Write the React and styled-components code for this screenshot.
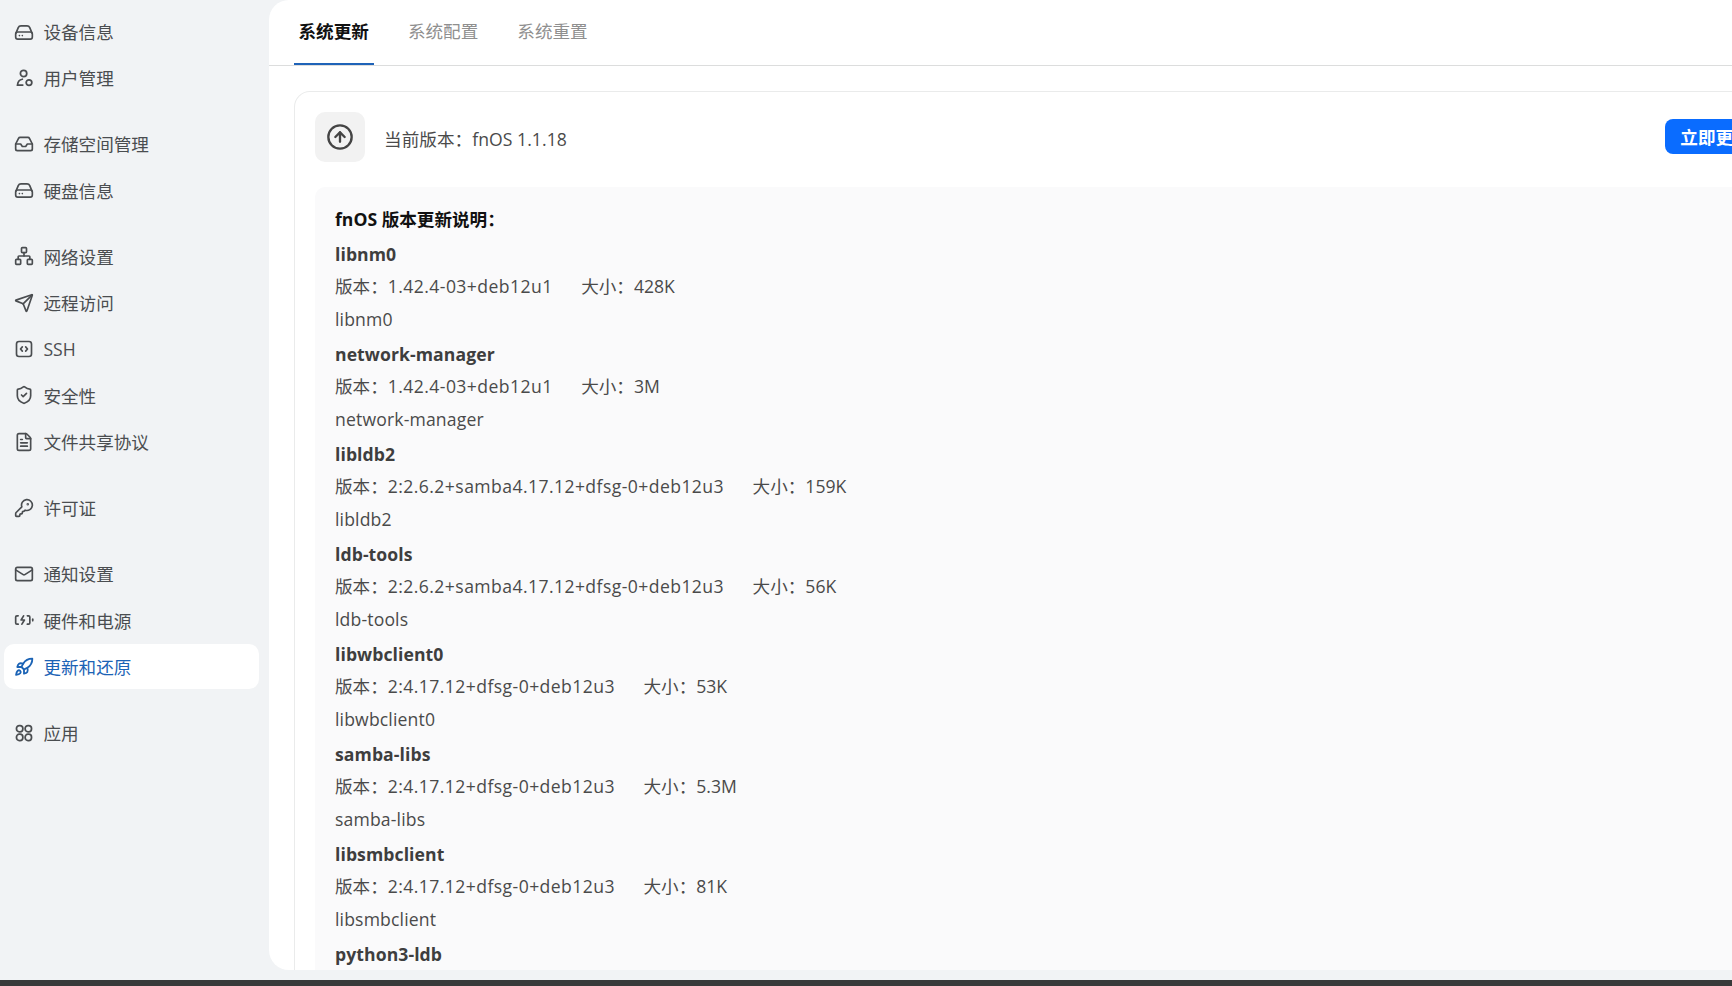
import React from 'react';
import styled, { createGlobalStyle } from 'styled-components';
import { Inbox, Network, Send, ShieldCheck, FileText, KeyRound, Mail, Rocket, CircleArrowUp } from 'lucide-react';

const GlobalStyle = createGlobalStyle`
  html, body { margin: 0; padding: 0; height: 100%; overflow: hidden; }
  body {
    font-family: "Open Sans", "Noto Sans CJK SC", sans-serif;
    background: #f1f3f5;
    color: #444;
  }
`;

const Page = styled.div`
  display: flex;
  flex-direction: column;
  height: 100vh;
`;

const Body = styled.div`
  flex: 1;
  min-height: 0;
  display: flex;
`;

const Taskbar = styled.div`
  height: 6px;
  background: #383a3a;
`;

const Sidebar = styled.nav`
  width: 269px;
  flex: none;
  padding: 9px 10px 0 4px;
  box-sizing: border-box;
`;

const Group = styled.div`
  display: flex;
  flex-direction: column;
  gap: 1.4px;
  margin-bottom: 21px;
`;

const Item = styled.a`
  height: 45px;
  display: flex;
  align-items: center;
  gap: 9.4px;
  padding-left: 10px;
  border-radius: 10px;
  font-size: 17.6px;
  color: ${(p) => (p.$active ? '#1b63b5' : '#4a4d50')};
  background: ${(p) => (p.$active ? '#fff' : 'transparent')};
  svg {
    width: 20px;
    height: 20px;
    flex: none;
    color: ${(p) => (p.$active ? '#1b63b5' : '#4a4d50')};
  }
`;

const Main = styled.main`
  flex: 1;
  min-width: 0;
  margin-bottom: 10px;
  background: #fff;
  border-radius: 20px 0 0 20px;
  overflow: hidden;
  display: flex;
  flex-direction: column;
`;

const Tabs = styled.div`
  height: 66px;
  flex: none;
  box-sizing: border-box;
  display: flex;
  gap: 29.5px;
  padding-left: 25px;
  border-bottom: 1px solid #dcdddd;
`;

const Tab = styled.div`
  height: 65px;
  box-sizing: border-box;
  padding: 0 5px 3px 4.5px;
  display: flex;
  align-items: center;
  font-size: 17.6px;
  font-weight: ${(p) => (p.$active ? 700 : 400)};
  color: ${(p) => (p.$active ? '#111' : '#8f8f8f')};
  border-bottom: 2px solid ${(p) => (p.$active ? '#1f63b8' : 'transparent')};
`;

const Card = styled.section`
  width: 1493px;
  flex: 1;
  min-height: 0;
  box-sizing: border-box;
  margin: 25px 0 0 25px;
  padding: 20px 20px 0;
  border: 1px solid #eaebeb;
  border-bottom: none;
  border-radius: 16px 16px 0 0;
  display: flex;
  flex-direction: column;
`;

const VersionRow = styled.div`
  display: flex;
  align-items: center;
  height: 50px;
  flex: none;
`;

const IconBox = styled.div`
  width: 50px;
  height: 50px;
  border-radius: 10px;
  background: #f2f2f2;
  display: flex;
  align-items: center;
  justify-content: center;
  color: #444;
  svg {
    width: 28px;
    height: 28px;
  }
`;

const VersionText = styled.div`
  margin: 2px 0 0 19px;
  font-size: 17.6px;
  letter-spacing: 0.05px;
  color: #4a4a4a;
`;

const UpdateButton = styled.button`
  margin: 0 0 1px auto;
  height: 34.5px;
  width: 101px;
  padding: 0;
  border: none;
  border-radius: 8px;
  background: #0a6cff;
  color: #fff;
  font: 700 17.6px "Open Sans", "Noto Sans CJK SC", sans-serif;
`;

const Notes = styled.div`
  flex: 1;
  min-height: 0;
  margin-top: 25px;
  padding: 15px 20px 0;
  background: #fafafb;
  border-radius: 10px 10px 0 0;
  font-size: 17.6px;
  overflow: hidden;
`;

const NotesTitle = styled.div`
  font-weight: 700;
  color: #111;
  line-height: 35px;
`;

const PackageName = styled.div`
  font-weight: 700;
  letter-spacing: 0.08px;
  color: #3e3e3e;
  line-height: 34px;
`;

const VersionLine = styled.div`
  line-height: 31px;
  color: #4a4a4a;
`;

const VersionValue = styled.span`
  letter-spacing: 0.42px;
`;

const Description = styled.div`
  line-height: 35px;
  letter-spacing: 0.15px;
  color: #4a4a4a;
`;

const Size = styled.span`
  margin-left: 28.5px;
`;

const DriveIcon = () => (
  <svg viewBox="0 0 24 24" fill="none" stroke="currentColor" strokeWidth="2" strokeLinejoin="round" strokeLinecap="round">
    <path d="M2.5 13l2.6-6.2A3.6 3.6 0 0 1 8.4 4.6h7.2a3.6 3.6 0 0 1 3.3 2.2l2.6 6.2" />
    <rect x="2" y="12" width="20" height="8.5" rx="2.5" />
    <path d="M6.5 16.3h.01M10 16.3h.01" />
  </svg>
);

const UserGearIcon = () => (
  <svg viewBox="0 0 24 24" fill="none" stroke="currentColor" strokeWidth="2.1" strokeLinecap="round">
    <circle cx="11.5" cy="6.5" r="3.8" />
    <path d="M10 13.5c-3 .5-5.5 3.2-5.8 7h6.3" />
    <circle cx="18" cy="17.5" r="3.4" />
  </svg>
);

const CodeBoxIcon = () => (
  <svg viewBox="0 0 24 24" fill="none" stroke="currentColor" strokeWidth="2" strokeLinecap="round" strokeLinejoin="round">
    <rect x="3" y="3" width="18" height="18" rx="3" />
    <path d="M10 9.5L7.8 12l2.2 2.5M14 9.5l2.2 2.5-2.2 2.5" />
  </svg>
);

const PowerIcon = () => (
  <svg viewBox="0 0 24 24" fill="none" stroke="currentColor" strokeWidth="2" strokeLinecap="round" strokeLinejoin="round">
    <path d="M5 7H3.5A1.5 1.5 0 0 0 2 8.5v7A1.5 1.5 0 0 0 3.5 17H5" />
    <path d="M16 7h1.5A1.5 1.5 0 0 1 19 8.5v7a1.5 1.5 0 0 1-1.5 1.5H16" />
    <path d="M11.5 7l-3 5h4l-3 5" />
    <path d="M22.5 11v2" />
  </svg>
);

const AppsIcon = () => (
  <svg viewBox="0 0 24 24" fill="none" stroke="currentColor" strokeWidth="2.1">
    <rect x="3" y="3" width="7.6" height="7.6" rx="3.4" />
    <rect x="13.4" y="3" width="7.6" height="7.6" rx="3.4" />
    <rect x="3" y="13.4" width="7.6" height="7.6" rx="3.4" />
    <rect x="13.4" y="13.4" width="7.6" height="7.6" rx="3.4" />
  </svg>
);

const menu = [
  [
    { label: '设备信息', icon: <DriveIcon /> },
    { label: '用户管理', icon: <UserGearIcon /> },
  ],
  [
    { label: '存储空间管理', icon: <Inbox strokeWidth={2} /> },
    { label: '硬盘信息', icon: <DriveIcon /> },
  ],
  [
    { label: '网络设置', icon: <Network strokeWidth={2} /> },
    { label: '远程访问', icon: <Send strokeWidth={2} /> },
    { label: 'SSH', icon: <CodeBoxIcon /> },
    { label: '安全性', icon: <ShieldCheck strokeWidth={2} /> },
    { label: '文件共享协议', icon: <FileText strokeWidth={2} /> },
  ],
  [{ label: '许可证', icon: <KeyRound strokeWidth={2} /> }],
  [
    { label: '通知设置', icon: <Mail strokeWidth={2} /> },
    { label: '硬件和电源', icon: <PowerIcon /> },
    { label: '更新和还原', icon: <Rocket strokeWidth={2.2} />, active: true },
  ],
  [{ label: '应用', icon: <AppsIcon /> }],
];

const packages = [
  { name: 'libnm0', version: '1.42.4-03+deb12u1', size: '428K' },
  { name: 'network-manager', version: '1.42.4-03+deb12u1', size: '3M' },
  { name: 'libldb2', version: '2:2.6.2+samba4.17.12+dfsg-0+deb12u3', size: '159K' },
  { name: 'ldb-tools', version: '2:2.6.2+samba4.17.12+dfsg-0+deb12u3', size: '56K' },
  { name: 'libwbclient0', version: '2:4.17.12+dfsg-0+deb12u3', size: '53K' },
  { name: 'samba-libs', version: '2:4.17.12+dfsg-0+deb12u3', size: '5.3M' },
  { name: 'libsmbclient', version: '2:4.17.12+dfsg-0+deb12u3', size: '81K' },
  { name: 'python3-ldb', version: '2:2.6.2+samba4.17.12+dfsg-0+deb12u3', size: '140K' },
];

export default function App() {
  return (
    <Page>
      <GlobalStyle />
      <Body>
        <Sidebar>
          {menu.map((group, i) => (
            <Group key={i}>
              {group.map((item) => (
                <Item key={item.label} $active={item.active}>
                  {item.icon}
                  {item.label}
                </Item>
              ))}
            </Group>
          ))}
        </Sidebar>
        <Main>
          <Tabs>
            <Tab $active>系统更新</Tab>
            <Tab>系统配置</Tab>
            <Tab>系统重置</Tab>
          </Tabs>
          <Card>
            <VersionRow>
              <IconBox>
                <CircleArrowUp strokeWidth={2} />
              </IconBox>
              <VersionText>当前版本：fnOS 1.1.18</VersionText>
              <UpdateButton>立即更新</UpdateButton>
            </VersionRow>
            <Notes>
              <NotesTitle>fnOS 版本更新说明：</NotesTitle>
              {packages.map((pkg) => (
                <div key={pkg.name}>
                  <PackageName>{pkg.name}</PackageName>
                  <VersionLine>
                    版本：<VersionValue>{pkg.version}</VersionValue>
                    <Size>大小：{pkg.size}</Size>
                  </VersionLine>
                  <Description>{pkg.name}</Description>
                </div>
              ))}
            </Notes>
          </Card>
        </Main>
      </Body>
      <Taskbar />
    </Page>
  );
}
